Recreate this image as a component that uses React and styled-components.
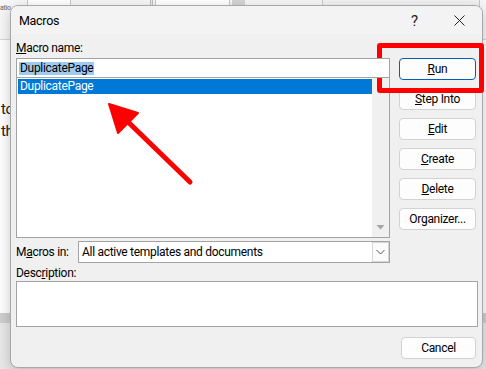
import React from 'react';
import styled, { createGlobalStyle } from 'styled-components';

const Global = createGlobalStyle`
  html, body { margin: 0; padding: 0; }
  body {
    width: 486px; height: 369px; overflow: hidden;
    font-family: Roboto, "Noto Sans", sans-serif;
    font-size: 12px; color: #000;
    letter-spacing: -0.3px;
  }
`;

const Screen = styled.div`
  position: relative;
  width: 486px;
  height: 369px;
  overflow: hidden;
  background: #fff;
`;

/* ---------- backdrop (Word document behind the dialog) ---------- */
const Backdrop = styled.div`
  display: flex;
  flex-direction: column;
  height: 100%;
`;

const Ribbon = styled.div`
  height: 40px;
  background: #f7f7f7;
  border-bottom: 1px solid #d6d6d6;
  display: flex;
  align-items: flex-start;
  box-sizing: border-box;
`;

const RibbonText = styled.span`
  font-size: 7px;
  color: #666;
  padding-top: 4px;
  width: 27px;
`;

const RibbonBox = styled.div`
  width: ${p => p.$w}px;
  margin-left: ${p => p.$ml || 0}px;
  height: 12px;
  border: 1px solid ${p => p.$line || '#c8c8c8'};
  border-top: none;
  background: ${p => p.$bg || '#fff'};
  box-sizing: border-box;
`;

const DocArea = styled.div`
  flex: 1;
  display: flex;
  flex-direction: column;
  background: #fff;
`;

const DocText = styled.div`
  font-size: 15px;
  line-height: 22px;
  color: #222;
  padding-top: ${p => p.$pt || 0}px;
  padding-left: 1px;
`;

const DocSpacer = styled.div`
  flex: 1;
`;

const GrayBand = styled.div`
  height: 10px;
  background: #cfcfcf;
`;

const DocFooter = styled.div`
  height: 46px;
  background: #e9e9e9;
`;

/* ---------- dialog ---------- */
const Dialog = styled.div`
  position: absolute;
  left: 10px;
  top: 5px;
  width: 473px;
  height: 363px;
  box-sizing: border-box;
  border: 1px solid #a8a8a8;
  border-radius: 8px;
  background: #f0f0f0;
  overflow: hidden;
  box-shadow: 0 4px 14px rgba(0, 0, 0, 0.22);
  display: flex;
  flex-direction: column;
`;

const TitleBar = styled.div`
  height: 29px;
  display: flex;
  align-items: center;
  padding-left: 8px;
  background: #f3f3f3;
`;

const Title = styled.span`
  flex: 1;
  font-size: 12.5px;
  line-height: 16px;
`;

const TitleButton = styled.div`
  width: 45px;
  height: 29px;
  display: flex;
  align-items: center;
  justify-content: center;
  font-size: 15px;
  color: #222;
`;

const Body = styled.div`
  padding: 5px 6px 0 5px;
  display: flex;
  flex-direction: column;
`;

const Label = styled.div`
  line-height: 16px;
  height: 16px;
  margin-bottom: ${p => p.$mb || 0}px;
  margin-top: ${p => p.$mt || 0}px;
  white-space: nowrap;
`;

const MainRow = styled.div`
  display: grid;
  grid-template-columns: 374px 77px;
  column-gap: 9px;
  align-items: start;
`;

const LeftCol = styled.div`
  display: flex;
  flex-direction: column;
`;

const TextInput = styled.div`
  height: 20px;
  box-sizing: border-box;
  border: 1px solid #a3a3a3;
  background: #fff;
  padding: 0 2px;
  display: flex;
  align-items: center;
  position: relative;
  z-index: 1;
`;

const SelectedText = styled.span`
  background: #9fcaf0;
  line-height: 13px;
  padding: 0 1px;
`;

const ListBox = styled.div`
  margin-top: -1px;
  height: 161px;
  box-sizing: border-box;
  border: 1px solid #a3a3a3;
  background: #fff;
  display: flex;
`;

const ListItems = styled.div`
  flex: 1;
  padding: 1px 0 0 1px;
`;

const ListItem = styled.div`
  height: 15px;
  line-height: 15px;
  padding-left: 2px;
  background: ${p => (p.$selected ? '#0078d7' : 'transparent')};
  color: ${p => (p.$selected ? '#fff' : '#000')};
`;

const ScrollBar = styled.div`
  width: 17px;
  background: #f0f0f0;
  display: flex;
  flex-direction: column;
  justify-content: flex-end;
  align-items: center;
  padding-bottom: 3px;
`;

const ComboRow = styled.div`
  margin-top: 3px;
  display: grid;
  grid-template-columns: 62px 1fr;
  align-items: center;
`;

const Combo = styled.div`
  height: 22px;
  box-sizing: border-box;
  border: 1px solid #a3a3a3;
  background: #fff;
  display: flex;
  align-items: center;
  padding-left: 3px;
`;

const ComboText = styled.span`
  flex: 1;
  white-space: nowrap;
`;

const ComboButton = styled.div`
  width: 17px;
  height: 20px;
  box-sizing: border-box;
  border: 1px solid #d6d6d6;
  background: #fbfbfb;
  display: flex;
  align-items: center;
  justify-content: center;
`;

const ButtonCol = styled.div`
  display: flex;
  flex-direction: column;
  gap: 8px;
`;

const Button = styled.div`
  width: ${p => p.$w || 77}px;
  height: 22px;
  box-sizing: border-box;
  border: 1px solid ${p => (p.$default ? '#005fb8' : '#d2d2d2')};
  border-radius: 4px;
  background: #fdfdfd;
  display: flex;
  align-items: center;
  justify-content: center;
  line-height: 16px;
  white-space: nowrap;
`;

const TextArea = styled.div`
  width: 462px;
  height: 46px;
  box-sizing: border-box;
  border: 1px solid #a3a3a3;
  background: #fff;
`;

const Footer = styled.div`
  margin-top: 10px;
  display: flex;
  justify-content: flex-end;
`;

/* ---------- annotations ---------- */
const Highlight = styled.div`
  position: absolute;
  left: 377px;
  top: 43px;
  width: 107px;
  height: 50px;
  box-sizing: border-box;
  border: 5px solid #ff0000;
  border-radius: 3px;
  pointer-events: none;
`;

const Overlay = styled.svg`
  position: absolute;
  left: 0;
  top: 0;
  pointer-events: none;
`;

export default function App() {
  return (
    <Screen>
      <Global />
      <Backdrop>
        <Ribbon>
          <RibbonText>atio</RibbonText>
          <RibbonBox $w={44} />
          <RibbonBox $w={3} $ml={79} $line="#bdbdbd" $bg="#eee" />
          <RibbonBox $w={75} $ml={2} />
          <RibbonBox $w={13} $ml={2} $bg="#d4d4d4" $line="#d4d4d4" />
          <RibbonBox $w={158} $ml={77} $bg="#f2f2f2" />
        </Ribbon>
        <DocArea>
          <DocText $pt={58}>to</DocText>
          <DocText>th</DocText>
          <DocSpacer />
          <GrayBand />
          <DocFooter />
        </DocArea>
      </Backdrop>

      <Dialog>
        <TitleBar>
          <Title>Macros</Title>
          <TitleButton>?</TitleButton>
          <TitleButton>
            <svg width="11" height="11" viewBox="0 0 11 11">
              <path d="M0.5 0.5 L10.5 10.5 M10.5 0.5 L0.5 10.5" stroke="#222" strokeWidth="1" fill="none" />
            </svg>
          </TitleButton>
        </TitleBar>
        <Body>
          <Label $mb={2}>
            <u>M</u>acro name:
          </Label>
          <MainRow>
            <LeftCol>
              <TextInput>
                <SelectedText>DuplicatePage</SelectedText>
              </TextInput>
              <ListBox>
                <ListItems>
                  <ListItem $selected>DuplicatePage</ListItem>
                </ListItems>
                <ScrollBar>
                  <svg width="9" height="14" viewBox="0 0 9 14">
                    <path d="M0.5 5 L8.5 5 L4.5 9.5 Z" fill="#a6a6a6" />
                  </svg>
                </ScrollBar>
              </ListBox>
              <ComboRow>
                <Label>
                  M<u>a</u>cros in:
                </Label>
                <Combo>
                  <ComboText>All active templates and documents</ComboText>
                  <ComboButton>
                    <svg width="9" height="6" viewBox="0 0 9 6">
                      <path d="M0.5 1 L4.5 5 L8.5 1" stroke="#555" strokeWidth="1" fill="none" />
                    </svg>
                  </ComboButton>
                </Combo>
              </ComboRow>
            </LeftCol>
            <ButtonCol>
              <Button $default>
                <u>R</u>un
              </Button>
              <Button>
                <u>S</u>tep Into
              </Button>
              <Button>
                <u>E</u>dit
              </Button>
              <Button>
                <u>C</u>reate
              </Button>
              <Button>
                <u>D</u>elete
              </Button>
              <Button>
                Or<u>g</u>anizer...
              </Button>
            </ButtonCol>
          </MainRow>
          <Label $mt={2}>
            Desc<u>r</u>iption:
          </Label>
          <TextArea />
          <Footer>
            <Button $w={75}>Cancel</Button>
          </Footer>
        </Body>
      </Dialog>

      <Highlight />
      <Overlay width="486" height="369" viewBox="0 0 486 369">
        <line x1="190" y1="182" x2="124" y2="118" stroke="#ff0000" strokeWidth="5" strokeLinecap="round" />
        <polygon points="109,104 138,113 118,133" fill="#ff0000" stroke="#ff0000" strokeWidth="2" strokeLinejoin="round" />
      </Overlay>
    </Screen>
  );
}
